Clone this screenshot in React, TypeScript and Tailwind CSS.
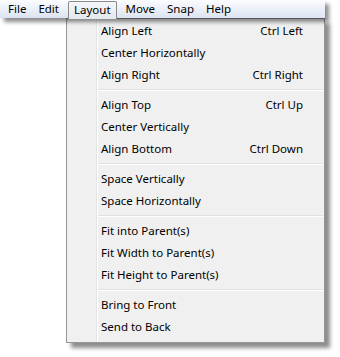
const MENUS = ["File", "Edit", "Layout", "Move", "Snap", "Help"];

type Item = { label: string; key?: string };

const GROUPS: Item[][] = [
  [
    { label: "Align Left", key: "Ctrl Left" },
    { label: "Center Horizontally" },
    { label: "Align Right", key: "Ctrl Right" },
  ],
  [
    { label: "Align Top", key: "Ctrl Up" },
    { label: "Center Vertically" },
    { label: "Align Bottom", key: "Ctrl Down" },
  ],
  [{ label: "Space Vertically" }, { label: "Space Horizontally" }],
  [
    { label: "Fit into Parent(s)" },
    { label: "Fit Width to Parent(s)" },
    { label: "Fit Height to Parent(s)" },
  ],
  [{ label: "Bring to Front" }, { label: "Send to Back" }],
];

export default function App() {
  return (
    <div
      className="w-[340px] h-[357px] bg-white text-[11.5px] text-black overflow-hidden"
      style={{ fontFamily: '"Noto Sans", "Open Sans", sans-serif' }}
    >
      {/* Menu bar */}
      <div className="relative z-10 w-[325px] h-[18px] flex items-center pl-[2px] bg-gradient-to-b from-[#fbfcfe] to-[#dbe4f1] shadow-[4px_4px_4px_rgba(0,0,0,0.45)]">
        {MENUS.map((m) =>
          m === "Layout" ? (
            <div
              key={m}
              className="h-[18px] mt-[1px] ml-[3px] mr-[3px] px-[5px] flex items-center border border-b-0 border-[#8a8a8a] rounded-t-[2px] bg-gradient-to-b from-[#f4f6f9] to-[#e3e8ef]"
            >
              {m}
            </div>
          ) : (
            <div key={m} className="px-[6px] h-[18px] flex items-center">
              {m}
            </div>
          )
        )}
      </div>

      {/* Dropdown */}
      <div className="relative ml-[66px] w-[259px] bg-[#f0f0f0] border border-[#979797] shadow-[5px_5px_4px_rgba(0,0,0,0.45)] pt-[1px] pb-[4px]">
        <div className="absolute top-0 bottom-0 left-[29px] w-[2px] border-l border-[#e2e3e3]">
          <div className="h-full w-px bg-white" />
        </div>
        {GROUPS.map((g, gi) => (
          <div key={gi}>
            {gi > 0 && (
              <div className="h-[8px] flex flex-col justify-center pl-[30px] pr-[1px]">
                <div className="h-px bg-[#e0e0e0]" />
                <div className="h-px bg-white" />
              </div>
            )}
            {g.map((it) => (
              <div
                key={it.label}
                className="relative h-[22px] flex items-center justify-between pl-[34px] pr-[21px]"
              >
                <span>{it.label}</span>
                {it.key && <span>{it.key}</span>}
              </div>
            ))}
          </div>
        ))}
      </div>
    </div>
  );
}
